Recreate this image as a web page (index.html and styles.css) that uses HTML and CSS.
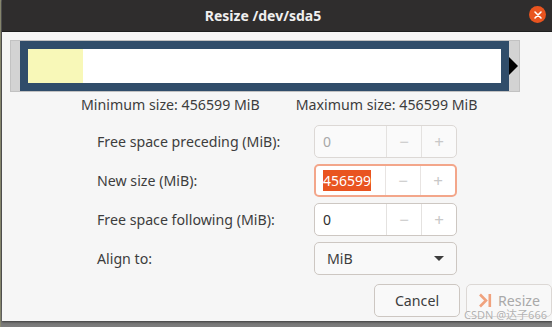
FILE: index.html
```html
<!DOCTYPE html>
<html lang="en">
<head>
    <meta charset="UTF-8">
    <title>Resize /dev/sda5</title>
    <link rel="stylesheet" href="styles.css">
</head>
<body>
    <div class="desktop">
        <div class="dialog">
            <header class="titlebar">
                <h1>Resize /dev/sda5</h1>
                <span class="close">
                    <svg width="16" height="16" viewBox="0 0 16 16">
                        <path d="M5 5 L11 11 M11 5 L5 11" stroke="#ffffff" stroke-width="1.6" stroke-linecap="round"/>
                    </svg>
                </span>
            </header>

            <div class="content">
                <div class="part-frame">
                    <div class="part-block">
                        <div class="part-inner">
                            <div class="part-used"></div>
                        </div>
                    </div>
                    <div class="part-arrow"></div>
                </div>

                <div class="limits">
                    <span>Minimum size: 456599 MiB</span>
                    <span>Maximum size: 456599 MiB</span>
                </div>

                <div class="form">
                    <label>Free space preceding (MiB):</label>
                    <div class="spin disabled">
                        <span class="spin-value">0</span>
                        <span class="spin-btn">&minus;</span>
                        <span class="spin-btn">+</span>
                    </div>

                    <label>New size (MiB):</label>
                    <div class="spin focused">
                        <span class="spin-value"><span class="selected">456599</span></span>
                        <span class="spin-btn">&minus;</span>
                        <span class="spin-btn">+</span>
                    </div>

                    <label>Free space following (MiB):</label>
                    <div class="spin">
                        <span class="spin-value">0</span>
                        <span class="spin-btn">&minus;</span>
                        <span class="spin-btn">+</span>
                    </div>

                    <label>Align to:</label>
                    <div class="combo">
                        <span>MiB</span>
                        <span class="combo-arrow"></span>
                    </div>
                </div>

                <div class="actions">
                    <button class="btn">Cancel</button>
                    <button class="btn btn-disabled">
                        <svg width="15" height="15" viewBox="0 0 15 15">
                            <path d="M2 1.5 L8 7.5 L2 13.5" fill="none" stroke="#f0a27e" stroke-width="2.6"/>
                            <rect x="10.5" y="1" width="2.6" height="13" fill="#f0a27e"/>
                        </svg>
                        Resize
                    </button>
                </div>
            </div>
            <span class="watermark">CSDN @达子666</span>
        </div>
    </div>
</body>
</html>
```

FILE: styles.css
```css
body {
    margin: 0;
    padding: 0;
    background: #6f6f6f;
    font-family: "Noto Sans", "Noto Sans CJK SC", sans-serif;
    overflow: hidden;
}
.desktop {
    width: 552px;
    height: 327px;
    background: linear-gradient(to bottom, #5c5c5c 0%, #5c5c5c 90%, #7d7d7d 100%);
    border-left: 1px solid #8a8a70;
    box-sizing: border-box;
}
.dialog {
    position: relative;
    margin-left: 1px;
    width: 550px;
    height: 321px;
    background: #f6f6f6;
    box-shadow: 0 1px 2px rgba(0, 0, 0, 0.5);
    overflow: hidden;
}
.titlebar {
    height: 32px;
    background: #2f2d2d;
    border-bottom: 1px solid #1e1e1e;
    box-sizing: border-box;
    display: flex;
    align-items: center;
    justify-content: center;
    padding-right: 28px;
}
.titlebar h1 {
    margin: 0;
    font-size: 14px;
    font-weight: bold;
    color: #efefef;
}
.close {
    position: absolute;
    right: 6px;
    top: 6px;
    width: 17px;
    height: 17px;
    border-radius: 50%;
    background: #e9541f;
    display: flex;
    align-items: center;
    justify-content: center;
}
.content {
    padding: 8px 0 0 8px;
}
.part-frame {
    width: 510px;
    height: 52px;
    box-sizing: border-box;
    border: 1px solid #c2c2c2;
    background: #d3d3d3;
    display: flex;
    padding-left: 9px;
}
.part-block {
    width: 489px;
    background: #304d6a;
    padding: 8px;
    box-sizing: border-box;
}
.part-inner {
    height: 100%;
    background: #ffffff;
}
.part-used {
    width: 55px;
    height: 100%;
    background: #f8f8b8;
}
.part-arrow {
    margin-top: 16px;
    width: 0;
    height: 0;
    border-top: 9px solid transparent;
    border-bottom: 9px solid transparent;
    border-left: 9px solid #000000;
}
.limits {
    display: flex;
    gap: 36px;
    padding-left: 71px;
    margin-top: 3px;
    font-size: 14.2px;
    color: #3d3d3d;
    line-height: 20px;
}
.form {
    display: grid;
    grid-template-columns: 217px 143px;
    grid-auto-rows: 33px;
    row-gap: 6px;
    padding-left: 87px;
    margin-top: 10px;
    align-items: center;
}
.form label {
    font-size: 14.2px;
    color: #3d3d3d;
}
.spin {
    height: 33px;
    box-sizing: border-box;
    border: 1px solid #cdc7c2;
    border-radius: 5px;
    background: #ffffff;
    display: flex;
    font-size: 14px;
}
.spin-value {
    flex: 1;
    display: flex;
    align-items: center;
    padding-left: 8px;
    color: #2e2e2e;
}
.spin-btn {
    width: 34px;
    border-left: 1px solid #e4e2e0;
    display: flex;
    align-items: center;
    justify-content: center;
    color: #c8c8c8;
    font-size: 17px;
}
.disabled {
    background: #fafafa;
    border-color: #dcd8d5;
}
.disabled .spin-value {
    color: #a8a8a8;
}
.focused {
    border: 2px solid #f3a68a;
}
.focused .spin-value {
    padding-left: 7px;
}
.focused .spin-btn {
    border-left-color: #e8e4e2;
}
.selected {
    background: #e95420;
    color: #ffffff;
    padding: 1px 0;
}
.combo {
    height: 33px;
    box-sizing: border-box;
    border: 1px solid #cdc7c2;
    border-radius: 5px;
    background: #f9f9f9;
    display: flex;
    align-items: center;
    justify-content: space-between;
    padding: 0 12px 0 12px;
    font-size: 14.2px;
    color: #3d3d3d;
}
.combo-arrow {
    width: 0;
    height: 0;
    border-left: 5px solid transparent;
    border-right: 5px solid transparent;
    border-top: 5px solid #3d3d3d;
}
.actions {
    display: flex;
    justify-content: flex-end;
    gap: 6px;
    margin-top: 9px;
}
.btn {
    width: 86px;
    height: 33px;
    border: 1px solid #cdc7c2;
    border-radius: 5px;
    background: #f9f9f9;
    font-family: "Noto Sans", sans-serif;
    font-size: 14.2px;
    color: #3d3d3d;
    display: flex;
    align-items: center;
    justify-content: center;
    gap: 5px;
    padding: 0;
}
.btn-disabled {
    color: #a9a9a9;
    background: #f8f8f8;
    border-color: #dcd8d5;
}
.watermark {
    position: absolute;
    right: 5px;
    bottom: 0;
    font-size: 11px;
    line-height: 12px;
    color: rgba(150, 150, 150, 0.75);
    text-shadow: 0 0 1px #ffffff;
}
```
